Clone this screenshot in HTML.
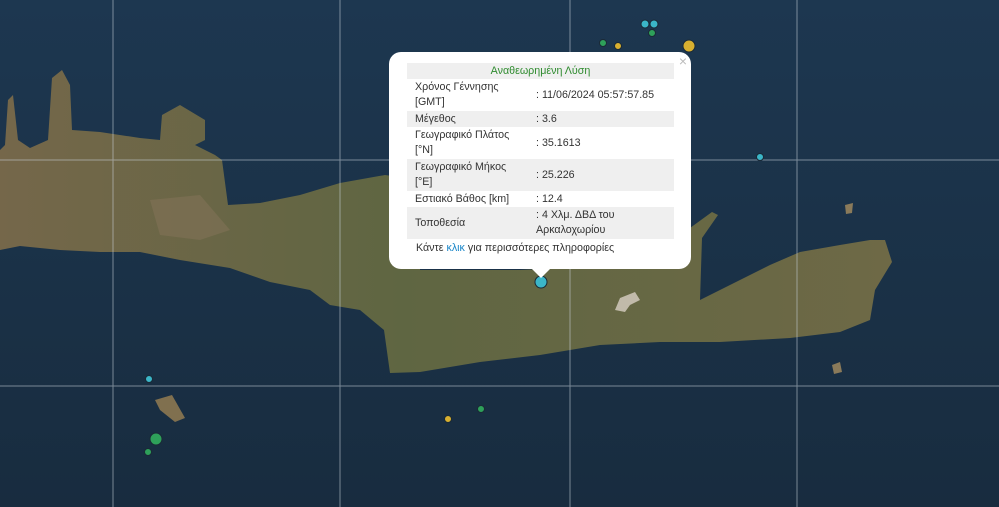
<!DOCTYPE html>
<html><head><meta charset="utf-8"><style>
body{margin:0;width:999px;height:507px;overflow:hidden;background:#1b3044;font-family:"Liberation Sans",sans-serif;position:relative}
svg{position:absolute;left:0;top:0}
.pop{position:absolute;left:389px;top:52px;width:302px;height:217px;background:#fff;border-radius:12px;font-size:10.7px;color:#333}
.tip{position:absolute;left:531px;top:268px;width:0;height:0;border-left:10px solid transparent;border-right:10px solid transparent;border-top:10px solid #fff}
.x{position:absolute;right:4px;top:1px;color:#bbb;font-size:14px}
table{position:absolute;left:18px;top:11px;width:267px;border-collapse:collapse}
td{padding:0 8px;line-height:15px;vertical-align:middle}
td.v{padding-left:3px;width:130px}
tr.s td{height:16px}
tr.d td{height:32px}
tr.g{background:#efefef}
.h{text-align:center;color:#2e8b2e}
.f{position:absolute;left:27px;top:190px}
.f span{color:#1a86c8}
</style></head><body>
<svg width="999" height="507">
<defs><linearGradient id="ld" x1="0" y1="0" x2="1" y2="0"><stop offset="0" stop-color="#75674a"/><stop offset=".45" stop-color="#5f6642"/><stop offset="1" stop-color="#6e6946"/></linearGradient>
<linearGradient id="sea" x1="0" y1="0" x2="0" y2="1"><stop offset="0" stop-color="#1d3750"/><stop offset="1" stop-color="#182c3f"/></linearGradient></defs>
<rect width="999" height="507" fill="url(#sea)"/>
<path fill="url(#ld)" d="M0,150 L5,145 L8,100 L13,95 L18,140 L30,148 L48,140 L52,78 L62,70 L70,85 L72,130 L100,132 L140,138 L160,140 L162,115 L180,105 L205,120 L205,140 L195,145 L215,155 L222,160 L228,205 L260,203 L300,195 L340,183 L385,175 L420,180 L420,270 L520,270 L560,268 L690,228 L712,212 L718,215 L702,238 L700,300 L740,280 L770,265 L800,252 L840,245 L870,240 L885,240 L892,262 L875,290 L870,320 L840,332 L790,338 L720,342 L660,342 L600,345 L540,355 L480,362 L420,372 L390,373 L384,330 L360,310 L330,305 L310,290 L270,282 L230,268 L180,260 L140,252 L100,252 L60,250 L20,246 L0,250 Z"/>
<path fill="#85735a" opacity=".5" d="M150,200 L200,195 L230,230 L200,240 L160,235 Z"/>
<path fill="#d8d0c4" opacity=".8" d="M620,298 L635,292 L640,300 L630,305 L625,312 L615,310 Z"/>
<path fill="#80704f" d="M155,400 L172,395 L185,418 L175,422 L160,410 Z"/>
<path fill="#8a7a5a" d="M832,365 L840,362 L842,372 L834,374 Z"/>
<path fill="#8a7a5a" d="M845,205 L853,203 L852,213 L846,214 Z"/>
<g stroke="#c9d2da" stroke-width="1" opacity=".55">
<line x1="113" y1="0" x2="113" y2="507"/><line x1="340" y1="0" x2="340" y2="507"/><line x1="570" y1="0" x2="570" y2="507"/><line x1="797" y1="0" x2="797" y2="507"/>
<line x1="0" y1="160" x2="999" y2="160"/><line x1="0" y1="386" x2="999" y2="386"/>
</g>
<g stroke="#1a2a36" stroke-width="1">
<circle cx="541" cy="282" r="6" fill="#3bb6c8"/>
<circle cx="645" cy="24" r="4" fill="#3bb6c8"/><circle cx="654" cy="24" r="4" fill="#3bb6c8"/>
<circle cx="652" cy="33" r="3.5" fill="#2ea05a"/><circle cx="603" cy="43" r="3.5" fill="#2ea05a"/>
<circle cx="618" cy="46" r="3.5" fill="#d8b030"/><circle cx="689" cy="46" r="6" fill="#d8b030"/>
<circle cx="760" cy="157" r="3.5" fill="#3bb6c8"/><circle cx="149" cy="379" r="3.5" fill="#3bb6c8"/>
<circle cx="156" cy="439" r="6" fill="#2ea05a"/><circle cx="148" cy="452" r="3.5" fill="#2ea05a"/>
<circle cx="481" cy="409" r="3.5" fill="#2ea05a"/><circle cx="448" cy="419" r="3.5" fill="#d8b030"/>
</g>
</svg>
<div class="pop"><span class="x">×</span>
<table>
<tr class="g s"><td colspan="2" class="h">Αναθεωρημένη Λύση</td></tr>
<tr class="d"><td>Χρόνος Γέννησης<br>[GMT]</td><td class="v">: 11/06/2024 05:57:57.85</td></tr>
<tr class="g s"><td>Μέγεθος</td><td class="v">: 3.6</td></tr>
<tr class="d"><td>Γεωγραφικό Πλάτος<br>[°N]</td><td class="v">: 35.1613</td></tr>
<tr class="g d"><td>Γεωγραφικό Μήκος<br>[°E]</td><td class="v">: 25.226</td></tr>
<tr class="s"><td>Εστιακό Βάθος [km]</td><td class="v">: 12.4</td></tr>
<tr class="g d"><td>Τοποθεσία</td><td class="v">: 4 Χλμ. ΔΒΔ του<br>Αρκαλοχωρίου</td></tr>
</table>
<div class="f">Κάντε <span>κλικ</span> για περισσότερες πληροφορίες</div>
</div>
<div class="tip"></div>
</body></html>
